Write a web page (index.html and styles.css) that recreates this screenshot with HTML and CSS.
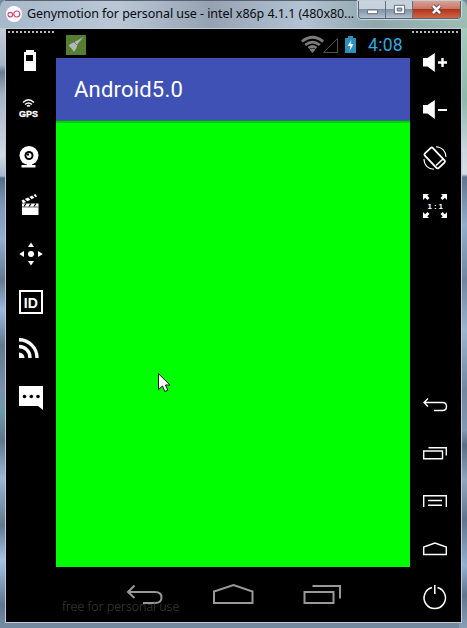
FILE: index.html
```html
<!DOCTYPE html>
<html lang="en">
<head>
<meta charset="utf-8">
<title>Genymotion</title>
<link rel="stylesheet" href="styles.css">
</head>
<body>
<div class="window">
  <header class="titlebar">
    <svg class="logo" viewBox="0 0 16 16"><circle cx="8" cy="8" r="8" fill="#fff"/><g fill="none" stroke="#df4275" stroke-width="1.2"><circle cx="4.3" cy="8.6" r="2.3"/><circle cx="10.8" cy="8" r="3"/></g></svg>
    <span class="title">Genymotion for personal use - intel x86p 4.1.1 (480x80...</span>
    <div class="controls">
      <span class="btn min"><svg viewBox="0 0 14 14"><rect x="1.5" y="7.5" width="11" height="4" rx=".6" fill="#fff" stroke="#566171"/></svg></span>
      <span class="btn max"><svg viewBox="0 0 14 14"><path d="M1.5 2.500h11v9h-11z" fill="#fff" stroke="#566171"/><path d="M4.500 5.500h5v3h-5z" fill="#a5b4c5" stroke="#566171"/></svg></span>
      <span class="btn close"><svg viewBox="0 0 14 14"><path d="M3 3l8 8M11 3l-8 8" stroke="#5d4a55" stroke-width="4.600"/><path d="M3.200 3.200l7.600 7.600M10.800 3.200l-7.600 7.600" stroke="#fff" stroke-width="2.600"/></svg></span>
    </div>
  </header>
  <main class="frame">
    <aside class="tools">
      <div class="grip"></div>
      <svg viewBox="0 0 24 24"><path fill-rule="evenodd" d="M5 3h2V1h8v2h2v19H5zM7 6v6h7V6z"/></svg>
      <svg viewBox="0 0 24 24"><g class="line" stroke-width="1.500"><path d="M4 5.500q5.500-5.500 11 0M6 7.500q3.500-3 7 0M8 9.300q1.500-1.300 3 0"/></g><text class="gps" x="0" y="20" textLength="19" lengthAdjust="spacingAndGlyphs">GPS</text></svg>
      <svg viewBox="0 0 24 24"><circle cx="10" cy="10.500" r="9.500"/><path d="M8 18h5v2h3.500v2.500h-14V20H8z"/><circle cx="10" cy="10.500" r="4.500" fill="#000"/><circle cx="10" cy="10.500" r="2.500"/><path d="M8 8.500h2v2H8z" fill="#000"/></svg>
      <svg viewBox="0 0 24 24"><path d="M3 10.500h16.500v11.500H3z"/><path d="M2.500 7.500L16.500 1l1.500 2.500L4 10.500z"/><path class="cut" d="M5 6l3 3M9.500 4l3 3M13.500 2l3 3M7 10.500l-2 3M12 10.500l-2 3M17 10.500l-2 3" stroke-width="1.200"/><path class="cut" d="M3 14h16.500" stroke-width=".6"/></svg>
      <svg viewBox="0 0 24 24"><circle cx="12" cy="13" r="3"/><path d="M12 1.500l3 4.500H9zM12 24.500l3-4.500H9zM.2 13l4.800-3v6zM23.800 13L19 10v6z"/></svg>
      <svg viewBox="0 0 24 24"><path class="line" d="M1 2h22v22H1z" stroke-width="2"/><text class="id" x="4.800" y="18.500" textLength="14" lengthAdjust="spacingAndGlyphs">ID</text></svg>
      <svg viewBox="0 0 24 24"><path d="M0 15.500A5.500 5.500 0 0 1 5.500 21H0z"/><path class="line" d="M0 9.500A11 11 0 0 1 11 21M0 2.800A18 18 0 0 1 18 21" stroke-width="3.400"/></svg>
      <svg viewBox="0 0 24 24"><path d="M0 1h24v24l-5-4H0z"/><g fill="#000"><circle cx="5.500" cy="11.500" r="1.800"/><circle cx="12.300" cy="11.500" r="1.800"/><circle cx="19" cy="11.500" r="1.800"/></g></svg>
    </aside>

    <section class="phone">
      <div class="status">
        <svg class="clean" viewBox="0 0 20 20"><path d="M0 0h20v20H0z" fill="#557e33"/><path d="M17.500 2L11.500 9l-1 4-2.500 4-2-3-3-3 .5-1.500L8.500 7z" fill="#b3b7b8"/><path d="M8 7l4 4" stroke="#777e79"/></svg>
        <svg class="signals" viewBox="0 0 56 20"><g fill="none" stroke="#7c7c7c" stroke-width="2.700"><path d="M.8 6.500q10.700-8.500 21.400 0M4.200 10q7.300-5.800 14.600 0M7.500 13q4-3 8 0"/></g><path d="M8.500 14.500q3-2 6 0L11.500 18z" fill="#7c7c7c"/><path d="M22.500 17.500L36.500 3.500v14z" fill="none" stroke="#505050"/><path d="M44 3h3V1h5v2h3v15H44z" fill="#2c90bd"/><path d="M50.500 5l-4 6h3l-1 5 4-7h-3z" fill="#fff"/></svg>
        <span class="clock">4:08</span>
      </div>
      <div class="appbar">Android5.0</div>
      <div class="canvas">
        <svg class="pointer" viewBox="0 0 14 20"><path d="M.5.700v16l4-3.700 2.300 5.500 3-1.300L7.500 12H12z" fill="#fff" stroke="#111"/></svg>
      </div>
      <div class="nav">
        <svg viewBox="0 0 40 24"><path d="M9.500 1.500L3 8l6.500 6M3 8h27q6.500 0 6.500 5.500T30 19H18"/></svg>
        <svg viewBox="0 0 40 24"><path d="M0 19V7.500L19.500 1 38.500 7.500V19z"/></svg>
        <svg viewBox="0 0 40 24"><path d="M1.500 8h29v11h-29zM9.500 2h27.500v12.500"/></svg>
        <span class="license">free for personal use</span>
      </div>
    </section>

    <aside class="tools right">
      <div class="grip"></div>
      <svg viewBox="0 0 24 24"><path d="M0 9h4.500L11.800 4v19L4.500 17.500H0zM15 12.300h9v2.400h-9zM18.300 9h2.400v9h-2.400z"/></svg>
      <svg viewBox="0 0 24 24"><path d="M0 8h4.500L11.800 3v19L4.500 16.500H0zM15 12h9v2h-9z"/></svg>
      <svg viewBox="0 0 24 24"><g class="line"><rect x="6.200" y="3" width="11" height="20" rx="1.500" stroke-width="1.800" transform="rotate(-43 11.700 13)"/><path d="M13 20.500l7-6.500" stroke-width="1.600"/><path d="M13 1.800c6 .2 10 4.700 10 10.200M1 14c0 6 4 10 10 10.200" stroke-width="1.100"/></g></svg>
      <svg viewBox="0 0 24 24"><path d="M0 1h6L4.300 2.700 6.500 5 4.500 7 2.200 4.700 0 7zM24 1h-6l1.700 1.700L17.500 5l2 2 2.300-2.300L24 7zM0 25h6l-1.700-1.700L6.500 21l-2-2-2.300 2.300L0 19zM24 25h-6l1.700-1.700-2.200-2.300 2-2 2.300 2.300L24 19z"/><text class="ratio" x="4.500" y="16" textLength="15.500">1:1</text></svg>
      <div class="gap"></div>
      <svg viewBox="0 0 24 24"><path class="line" d="M5 5.500L1 9.500l4 4M1 9.500h18.500q4 0 4 4t-4 4H11" stroke-width="1.400"/></svg>
      <svg viewBox="0 0 24 24"><path class="line" d="M.7 10h18.800v7.700H.7zM5.500 6.800h17.800v7.700" stroke-width="1.400"/></svg>
      <svg viewBox="0 0 24 24"><path class="line" d="M.7 18V6.800h22.600V18M5 11.500h14M5 16.300h14" stroke-width="1.400"/></svg>
      <svg viewBox="0 0 24 24"><path class="line" d="M.7 17.500V10L12 6l11.300 4v7.500z" stroke-width="1.400"/></svg>
      <svg viewBox="0 0 24 24"><path class="line" d="M9 2.500a10.700 10.700 0 1 0 5.500 0M11.800 0v9" stroke-width="1.500"/></svg>
    </aside>
  </main>
</div>
</body>
</html>
```

FILE: styles.css
```css
* { box-sizing: border-box; }

body {
  margin: 0;
  background: #7389a0;
  font-family: Roboto, "Noto Sans", sans-serif;
}

.window {
  width: 467px;
  height: 628px;
  padding: 0 5px 5px;
  display: flex;
  flex-direction: column;
  border-radius: 7px 7px 0 0;
  background:
    linear-gradient(90deg, #a6b8ca, #bac8d6 25%, #95a2b2 45%, #b3c3d3 65%, #8fa7ad 80%, #9bbdb2) 0 0 / 100% 28px no-repeat,
    linear-gradient(#c2cdd8 28px, #a4b6c8 65px, #687e94 72px, #a4b4c5 95px, #d1dae2 155px, #a4b8cf 176px, #546c86 178px, #7d98b7 205px, #91add0 240px, #65798f 280px, #9bb8df 310px, #637890 345px, #7890ab 390px, #6b9ba8 412px, #60758c 440px, #9ab7d5 478px, #63788e 525px, #a4c4e8 560px, #60758d 605px, #7389a0 623px) 0 0 / 8px 100% no-repeat,
    linear-gradient(#a3cbbb 28px, #8db9aa 100px, #c9d6dd 150px, #d4dde4 174px, #60758e 177px, #91aecd 225px, #70869f 280px, #9ab5d1 330px, #71879f 390px, #8199b2 430px, #596e85 445px, #8ea6be 480px, #60758d 520px, #93b1d3 565px, #5f758e 595px, #899fb5 628px) 100% 0 / 8px 100% no-repeat,
    #7389a0;
}

.titlebar {
  flex: none;
  height: 28px;
  display: flex;
  align-items: flex-start;
  border-top: 1px solid #59636f;
}

.logo { width: 16px; height: 16px; margin: 5px 5px 0 1px; }

.title {
  width: 332px;
  flex: none;
  font: 12.5px/16px "Noto Sans", sans-serif;
  letter-spacing: -.06px;
  color: #080b10;
  padding-top: 5px;
  white-space: nowrap;
}

.controls {
  display: flex;
  height: 18px;
  margin-left: -1px;
  border: 1px solid #566476;
  border-top: 0;
  border-radius: 0 0 4px 4px;
  overflow: hidden;
  box-shadow: 0 0 1px 1px #d0dae2;
}

.btn {
  width: 27px;
  display: flex;
  align-items: center;
  justify-content: center;
  border-right: 1px solid #647184;
  background: linear-gradient(#c8d2dc 48%, #8293a7 50%, #b2c0ce);
}

.btn svg { width: 13px; height: 13px; }
.btn.close { width: 47px; border: 0; background: linear-gradient(#d9a096 0, #c67865 46%, #b4341b 50%, #ca6845); }

.frame {
  flex: 1;
  min-height: 0;
  display: flex;
  border: 1px solid #c0ccd7;
  background: #000;
}

.tools {
  width: 50px;
  padding: 2px 0 0 13px;
  display: flex;
  flex-direction: column;
}

.tools > svg {
  flex: none;
  width: 24px;
  height: 24px;
  margin: 12px 0;
  fill: #fff;
  overflow: visible;
}

.grip {
  flex: none;
  width: 46px;
  height: 2px;
  margin: 0 0 4px -11px;
  background: repeating-linear-gradient(90deg, #b9b9b9 0 2px, #000 2px 4px);
}

.gap { flex: none; height: 152px; }
.line { fill: none; stroke: #fff; }
.cut { fill: none; stroke: #000; }
.gps { font: 900 9px "Liberation Sans", sans-serif; stroke: #fff; stroke-width: .3px; }
.id { font: bold 15.5px "Liberation Sans", sans-serif; }
.ratio { font: bold 8px "Liberation Sans", sans-serif; }

.phone {
  width: 354px;
  display: flex;
  flex-direction: column;
}

.status {
  height: 29px;
  display: flex;
  align-items: center;
  padding: 3px 6px 0 10px;
}

.clean { width: 20px; height: 20px; }
.signals { width: 56px; height: 20px; margin-left: auto; }

.clock {
  width: 36px;
  margin-left: 11px;
  font-size: 17.5px;
  letter-spacing: .3px;
  white-space: nowrap;
  color: #32a9dc;
}

.appbar {
  height: 63px;
  padding-left: 18px;
  background: #3f51b5;
  border-bottom: 1px solid #2a7567;
  color: #fff;
  font-size: 22px;
  line-height: 64px;
  letter-spacing: .2px;
}

.canvas {
  height: 446px;
  padding: 250px 0 0 102px;
  border-top: 2px solid #00d000;
  background: #0f0;
}

.pointer { display: block; width: 14px; height: 20px; }

.nav {
  position: relative;
  flex: 1;
  display: flex;
  gap: 49px;
  padding: 17px 0 0 69px;
}

.nav svg { width: 40px; height: 24px; fill: none; stroke: #999; stroke-width: 2; overflow: visible; }

.license {
  position: absolute;
  left: 6px;
  top: 32px;
  font: 300 12.5px/16px "Open Sans", sans-serif;
  letter-spacing: 0;
  white-space: nowrap;
  color: #454545;
}
```
